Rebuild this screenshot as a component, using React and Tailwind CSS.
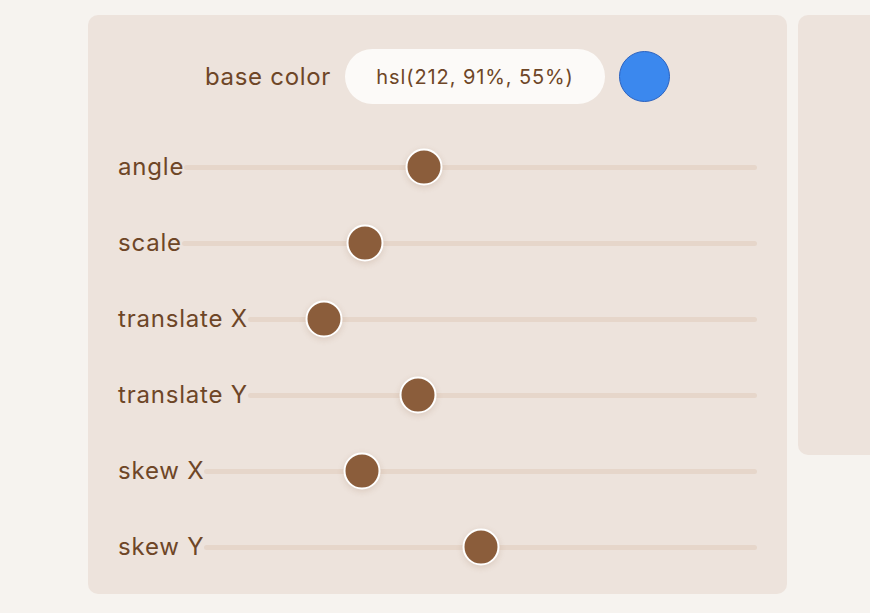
const sliders = [
  { label: 'angle', value: 0.418 },
  { label: 'scale', value: 0.318 },
  { label: 'translate X', value: 0.149 },
  { label: 'translate Y', value: 0.335 },
  { label: 'skew X', value: 0.286 },
  { label: 'skew Y', value: 0.5 },
]

function Slider({ label, value }) {
  return (
    <div className="flex items-center h-[76px]">
      <span className="text-[24px] leading-none tracking-[0.8px] text-[#6e4627] whitespace-nowrap">{label}</span>
      <div className="relative flex-1 h-[5px] rounded-full bg-[#e6d6ca]">
        <div
          className="absolute top-1/2 w-[37px] h-[37px] -translate-x-1/2 -translate-y-1/2 rounded-full bg-[#8b5d3b] border-2 border-white shadow-[0_2px_6px_rgba(139,93,59,0.18)]"
          style={{ left: `${value * 100}%` }}
        />
      </div>
    </div>
  )
}

export default function App() {
  return (
    <div className="w-screen h-screen overflow-hidden bg-[#f6f3ef] flex items-start gap-[11px] pl-[88px] pt-[15px] font-['Inter',sans-serif]">
      <div className="w-[699px] shrink-0 rounded-[10px] bg-[#ede3dc] px-[30px] pt-[34px] pb-[9px]">
        <div className="flex items-center justify-center gap-[14px] mb-[25px]">
          <span className="text-[24px] leading-none tracking-[0.7px] text-[#6e4627]">base color</span>
          <div className="w-[260px] h-[55px] rounded-full bg-[#fcfaf8] flex items-center justify-center text-[20px] tracking-[0.9px] text-[#6e4627]">
            hsl(212, 91%, 55%)
          </div>
          <div className="w-[51px] h-[51px] rounded-full bg-[#3b88ee] border border-[#2a62c0]" />
        </div>
        {sliders.map(s => (
          <Slider key={s.label} label={s.label} value={s.value} />
        ))}
      </div>
      <div className="w-[300px] h-[440px] shrink-0 rounded-[10px] bg-[#ede3dc]" />
    </div>
  )
}
